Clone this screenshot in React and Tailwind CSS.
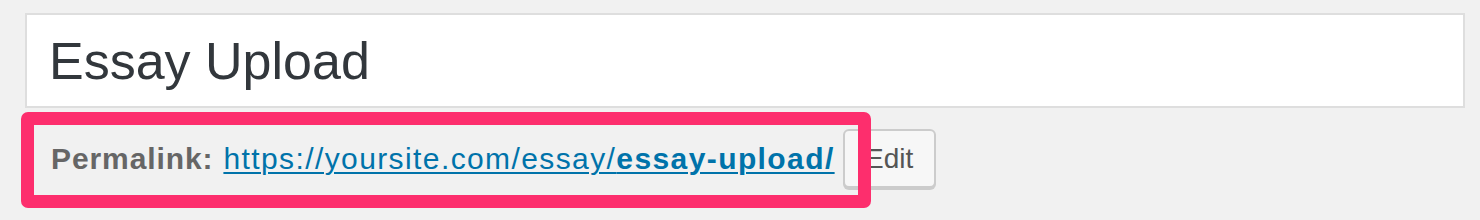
import React from 'react';

const font = { fontFamily: '"Liberation Sans", Arial, sans-serif' };

export default function App() {
  return (
    <div className="relative w-[1480px] h-[220px] bg-[#f1f1f1] pt-[13px] pl-[25px]" style={font}>
      {/* title field */}
      <div className="w-[1440px] h-[95px] bg-white border-2 border-[#dedede] flex items-center pl-[22px]">
        <span className="text-[52px] leading-none text-[#32373c]">Essay Upload</span>
      </div>

      {/* permalink row */}
      <div className="mt-[21px] flex items-center pl-[26px] h-[59px]">
        <span className="text-[30px] font-bold text-[#666666] tracking-[0.9px] mr-[10px]">Permalink:</span>
        <a href="#" className="text-[30px] text-[#0073aa] tracking-[1.4px] underline underline-offset-[3px] decoration-2">
          https://yoursite.com/essay/<span className="font-bold">essay-upload/</span>
        </a>
        <button className="ml-[8px] w-[93px] h-[59px] rounded-[6px] border-2 border-[#cccccc] bg-[#f7f7f7] shadow-[0_2px_0_#cccccc] text-[28px] text-[#555555] flex items-center justify-center">
          Edit
        </button>
      </div>

      {/* highlight annotation */}
      <div className="absolute left-[21px] top-[112px] w-[850px] h-[96px] border-[13px] border-[#fd2e6d] rounded-[7px] pointer-events-none" />
    </div>
  );
}
